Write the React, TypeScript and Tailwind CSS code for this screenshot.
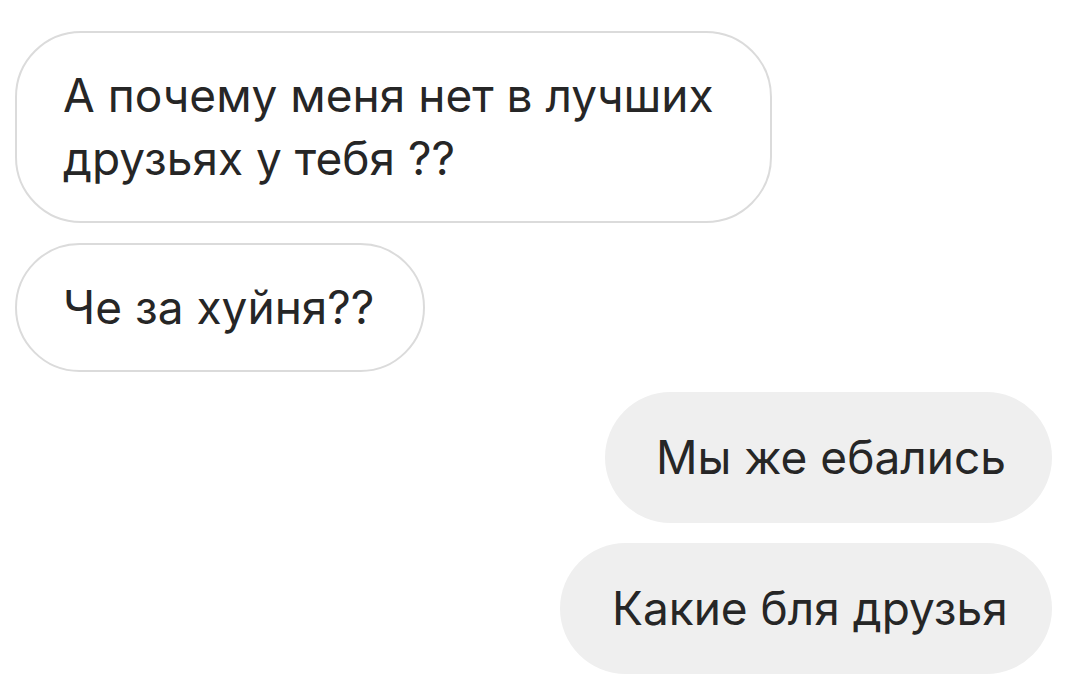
import React from "react";

export default function App() {
  return (
    <div
      className="w-[1088px] h-[699px] bg-white overflow-hidden flex flex-col pt-[31px] pl-[15px] pr-[36px] gap-[20px] text-[#262626]"
      style={{ fontFamily: "Inter, 'Noto Sans', sans-serif" }}
    >
      <div className="self-start w-[757px] border-2 border-[#dbdbdb] rounded-[66px] pl-[46px] pr-[20px] py-[31px] text-[46px] leading-[63px]">
        А почему меня нет в лучших друзьях у тебя ??
      </div>
      <div className="self-start w-[410px] border-2 border-[#dbdbdb] rounded-full pl-[46px] py-[31px] text-[46px] leading-[63px] whitespace-nowrap">
        Че за хуйня??
      </div>
      <div className="self-end w-[447px] bg-[#efefef] rounded-full pl-[51px] py-[34px] text-[46px] leading-[63px] whitespace-nowrap">
        Мы же ебались
      </div>
      <div className="self-end w-[492px] bg-[#efefef] rounded-full pl-[52px] py-[34px] text-[46px] leading-[63px] whitespace-nowrap">
        Какие бля друзья
      </div>
    </div>
  );
}
